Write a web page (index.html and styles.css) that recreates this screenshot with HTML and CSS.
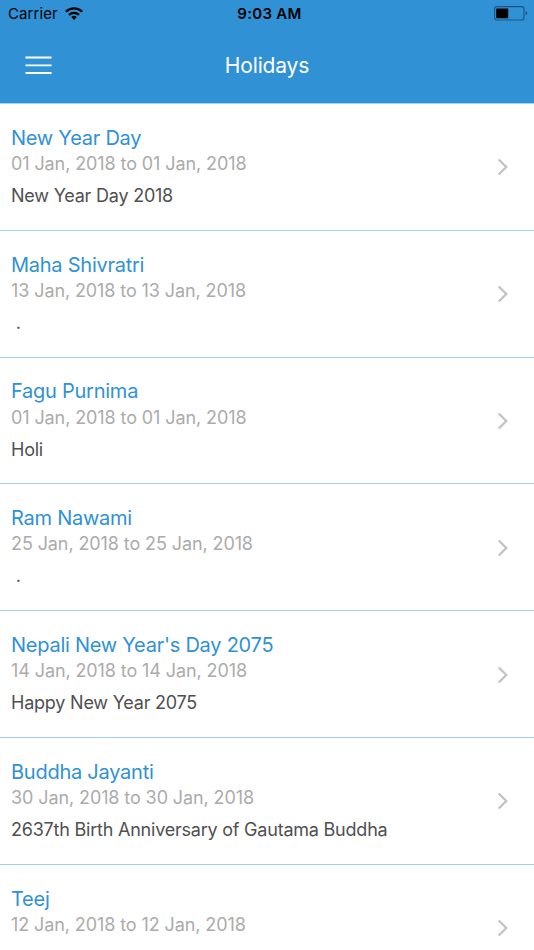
FILE: index.html
```html
<!DOCTYPE html>
<html lang="en">
<head>
<meta charset="utf-8">
<title>Holidays</title>
<link rel="stylesheet" href="styles.css">
</head>
<body>
<header class="header">
  <div class="status">
    <div class="carrier"><span class="carrier-name">Carrier</span>
      <svg class="wifi" width="18" height="13" viewBox="0 0 18 13"><path d="M9 13 6.2 10a4 4 0 0 1 5.6 0zM3.2 7.1a8.2 8.2 0 0 1 11.6 0l-1.6 1.6a6 6 0 0 0-8.4 0zM.1 3.9a12.6 12.6 0 0 1 17.8 0l-1.6 1.6a10.3 10.3 0 0 0-14.6 0z"/></svg>
    </div>
    <div class="time"><span>9:03 AM</span></div>
    <svg class="battery" width="34" height="15" viewBox="0 0 34 15"><rect x=".6" y=".6" width="29.4" height="13.4" rx="2.6" fill="none" stroke="#1c567e" stroke-width="1.1"/><rect x="2.2" y="2.4" width="12" height="9.8" rx=".4"/><path d="M31.6 5q1.6.6 1.6 2.2t-1.6 2.2z" fill="#1c567e"/></svg>
  </div>
  <nav class="nav">
    <svg class="menu" width="27" height="19" viewBox="0 0 27 19"><path d="M.5 1.5h26M.5 9.3h26M.5 17h26"/></svg>
    <h1 class="heading"><span>Holidays</span></h1>
  </nav>
</header>
<main id="list" class="list"></main>
<script src="app.js"></script>
</body>
</html>
```
FILE: styles.css
```css
* { box-sizing: border-box; }
body { margin: 0; height: 950px; overflow: hidden; background: #fff; font-family: Inter, sans-serif; }
.header { height: 104px; background: #3092d5; border-bottom: 1px solid #a5d0ee; }
.status { height: 27px; display: grid; grid-template-columns: 1fr auto 1fr; align-items: center; padding: 0 6px 0 8px; font-size: 15px; color: #000; }
.carrier { display: flex; align-items: center; gap: 7px; letter-spacing: .1px; }
.time { padding-left: 3px; font-weight: 600; letter-spacing: .3px; }
.battery { justify-self: end; }
.nav { height: 76px; display: grid; grid-template-columns: 1fr auto 1fr; align-items: center; padding: 0 25px; }
.menu { fill: none; stroke: #fff; stroke-width: 1.8; }
.heading { margin: 0; padding-top: 2px; font-size: 21px; line-height: 26px; font-weight: 400; letter-spacing: -.15px; color: #fff; }
.item { height: 126.8px; padding: 19.9px 25px 0 11px; display: flex; justify-content: space-between; border-bottom: 1px solid #a3cfea; }
.name { margin: 0; font-size: 20px; line-height: 28.1px; font-weight: 400; letter-spacing: -.25px; color: #3092d5; }
.dates { margin: 0; font-size: 18px; line-height: 24px; letter-spacing: -.1px; color: #ababab; }
.note { margin: 8px 0 0; font-size: 18px; line-height: 24px; letter-spacing: -.22px; color: #505050; white-space: pre; }
.chevron { margin-top: 34.6px; fill: none; stroke: #c3c3c7; stroke-width: 2.3; }
```
FILE: app.js
```js
const holidays = [
  ["New Year Day", "01 Jan, 2018 to 01 Jan, 2018", "New Year Day 2018"],
  ["Maha Shivratri", "13 Jan, 2018 to 13 Jan, 2018", " ."],
  ["Fagu Purnima", "01 Jan, 2018 to 01 Jan, 2018", "Holi"],
  ["Ram Nawami", "25 Jan, 2018 to 25 Jan, 2018", " ."],
  ["Nepali New Year's Day 2075", "14 Jan, 2018 to 14 Jan, 2018", "Happy New Year 2075"],
  ["Buddha Jayanti", "30 Jan, 2018 to 30 Jan, 2018", "2637th Birth Anniversary of Gautama Buddha"],
  ["Teej", "12 Jan, 2018 to 12 Jan, 2018", ""]
];
document.getElementById("list").innerHTML = holidays.map(([name, dates, note]) => `
<article class="item"><div><h2 class="name"><span>${name}</span></h2><p class="dates"><span>${dates}</span></p><p class="note"><span>${note}</span></p></div>
<svg class="chevron" width="12" height="18" viewBox="0 0 12 18"><path d="M1.7 1.5 9.3 9 1.7 16.5"/></svg></article>`).join("");
```
